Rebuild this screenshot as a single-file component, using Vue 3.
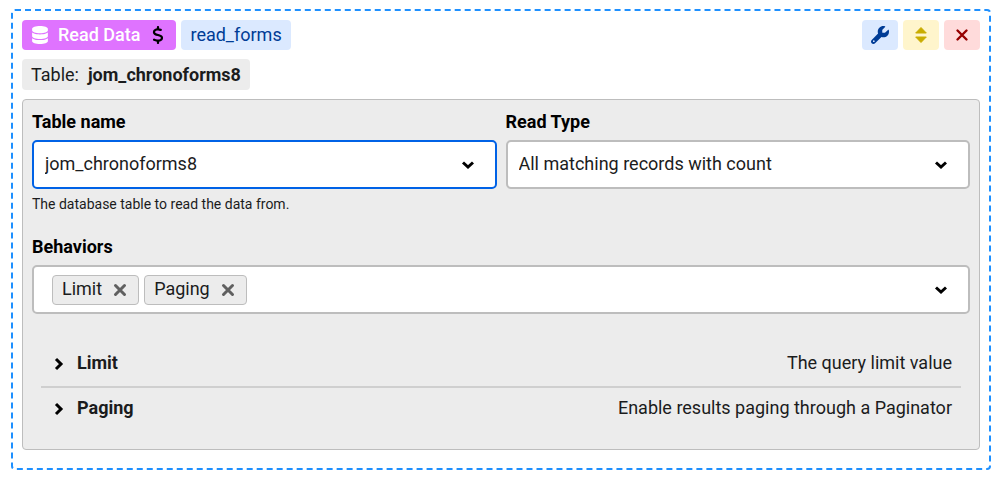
<script setup>
import { ref } from 'vue'

const tableName = ref('jom_chronoforms8')
const readType = ref('All matching records with count')
const behaviors = ref(['Limit', 'Paging'])
const sections = [
  { title: 'Limit', note: 'The query limit value' },
  { title: 'Paging', note: 'Enable results paging through a Paginator' },
]

function removeBehavior(name) {
  behaviors.value = behaviors.value.filter((item) => item !== name)
}
</script>

<template>
  <main class="block">
    <header class="bar">
      <span class="tag action">
        <svg class="db" viewBox="0 0 448 512" aria-hidden="true"><path fill="currentColor" d="M448 80v48c0 44.2-100.3 80-224 80S0 172.2 0 128V80C0 35.8 100.3 0 224 0S448 35.8 448 80zM393.2 214.7c20.8-7.4 39.9-16.9 54.8-28.6V288c0 44.2-100.3 80-224 80S0 332.2 0 288V186.1c14.9 11.8 34 21.2 54.8 28.6C99.7 230.7 159.5 240 224 240s124.3-9.3 169.2-25.3zM0 346.1c14.9 11.8 34 21.2 54.8 28.6C99.7 390.7 159.5 400 224 400s124.3-9.3 169.2-25.3c20.8-7.4 39.9-16.9 54.8-28.6V432c0 44.2-100.3 80-224 80S0 476.2 0 432V346.1z" /></svg>
        <span>Read Data</span>
        <svg class="dollar" viewBox="0 0 320 512" aria-hidden="true"><path fill="currentColor" d="M160 0c17.700 0 32 14.300 32 32V67.700c1.600 .2 3.100 .4 4.700 .7c.4 .1 .7 .1 1.100 .2l48 8.800c17.400 3.200 28.900 19.900 25.700 37.200s-19.900 28.900-37.200 25.700l-47.500-8.700c-31.300-4.600-58.900-1.500-78.300 6.200s-27.200 18.300-29 28.100c-2 10.700-.5 16.700 1.200 20.400c1.800 3.900 5.500 8.300 12.800 13.200c16.300 10.700 41.300 17.700 73.700 26.300l2.900 .8c28.600 7.600 63.600 16.800 89.600 33.800c14.200 9.300 27.600 21.900 35.900 39.500c8.500 17.900 10.300 37.900 6.400 59.200c-6.900 38-33.100 63.400-65.600 76.700c-13.700 5.600-28.600 9.200-44.400 11V480c0 17.700-14.300 32-32 32s-32-14.300-32-32V445.100c-.4-.1-.9-.1-1.300-.2l-.2 0c-24.400-3.800-64.500-14.300-91.500-26.300c-16.100-7.200-23.400-26.100-16.200-42.200s26.100-23.400 42.200-16.200c20.900 9.300 55.300 18.500 75.200 21.600c31.900 4.700 58.200 2 76-5.300c16.900-6.900 24.600-16.900 26.800-28.900c1.900-10.600 .4-16.700-1.300-20.400c-1.900-4-5.600-8.400-13-13.300c-16.400-10.700-41.500-17.700-74-26.300l-2.800-.7C119.400 279.300 84.400 270 58.400 253c-14.200-9.300-27.500-22-35.800-39.600c-8.400-17.900-10.100-37.900-6.100-59.200C23.700 116 52.300 91.200 84.800 78.300c13.300-5.300 27.900-8.900 43.200-11V32c0-17.700 14.300-32 32-32z" /></svg>
      </span>
      <span class="tag name">read_forms</span>
      <div class="tools">
        <button class="tool edit" type="button" aria-label="Settings">
          <svg viewBox="0 0 512 512" aria-hidden="true"><path fill="currentColor" d="M352 320c88.400 0 160-71.600 160-160c0-15.300-2.200-30.100-6.200-44.200c-3.100-10.800-16.400-13.200-24.300-5.300l-76.800 76.800c-3 3-7.100 4.700-11.300 4.700H336c-8.800 0-16-7.200-16-16V118.600c0-4.200 1.700-8.300 4.700-11.300l76.800-76.800c7.900-7.900 5.400-21.200-5.300-24.300C382.100 2.200 367.300 0 352 0C263.600 0 192 71.600 192 160c0 19.100 3.400 37.500 9.500 54.500L19.900 396.100C7.200 408.800 0 426.100 0 444.100C0 481.600 30.400 512 67.900 512c18 0 35.300-7.200 48-19.900L297.500 310.500c17 6.200 35.400 9.500 54.500 9.500zM80 408a24 24 0 1 1 0 48 24 24 0 1 1 0-48z" /></svg>
        </button>
        <button class="tool sort" type="button" aria-label="Move">
          <svg viewBox="0 0 18 18" aria-hidden="true"><path fill="currentColor" stroke="currentColor" stroke-linejoin="round" d="M9 1.500L14.300 7H3.700zM9 16.500L14.300 11H3.700z" /></svg>
        </button>
        <button class="tool remove" type="button" aria-label="Remove">
          <svg viewBox="0 0 18 18" aria-hidden="true"><path fill="none" stroke="currentColor" stroke-width="2.400" stroke-linecap="round" d="M4.500 4.500L13.500 13.500M13.500 4.500L4.500 13.500" /></svg>
        </button>
      </div>
    </header>

    <div class="bar">
      <span class="tag info">Table: <strong>{{ tableName }}</strong></span>
    </div>

    <section class="panel">
      <div class="fields">
        <div class="field">
          <label for="table-name">Table name</label>
          <div class="control">
            <select id="table-name" v-model="tableName" class="box active">
              <option>jom_chronoforms8</option>
            </select>
            <svg class="chevron" viewBox="0 0 18 18" aria-hidden="true"><path d="M4 6.500L9 11L14 6.500" /></svg>
          </div>
          <small>The database table to read the data from.</small>
        </div>
        <div class="field">
          <label for="read-type">Read Type</label>
          <div class="control">
            <select id="read-type" v-model="readType" class="box">
              <option>All matching records with count</option>
            </select>
            <svg class="chevron" viewBox="0 0 18 18" aria-hidden="true"><path d="M4 6.500L9 11L14 6.500" /></svg>
          </div>
        </div>
      </div>

      <div class="field" role="group" aria-labelledby="behaviors-label">
        <span id="behaviors-label" class="label">Behaviors</span>
        <div class="box multi">
          <span v-for="item in behaviors" :key="item" class="chip">
            <span class="chip-text">{{ item }}</span>
            <button type="button" :aria-label="`Remove ${item}`" @click="removeBehavior(item)">
              <svg viewBox="0 0 18 18" aria-hidden="true"><path d="M4.500 4.500L13.500 13.500M13.500 4.500L4.500 13.500" /></svg>
            </button>
          </span>
          <button class="open" type="button" aria-label="Show behaviors">
            <svg class="chevron" viewBox="0 0 18 18" aria-hidden="true"><path d="M4 6.500L9 11L14 6.500" /></svg>
          </button>
        </div>
      </div>

      <div class="sections">
        <details v-for="section in sections" :key="section.title">
          <summary>
            <svg class="arrow" viewBox="0 0 18 18" aria-hidden="true"><path d="M6 5L11 10L6 15" /></svg>
            <strong>{{ section.title }}</strong>
            <span class="note">{{ section.note }}</span>
          </summary>
        </details>
      </div>
    </section>
  </main>
</template>

<style>
body {
  background: #fff;
}
</style>

<style scoped>
* {
  box-sizing: border-box;
}
.block {
  display: flex;
  flex-direction: column;
  gap: 9px;
  margin: 9px 11px;
  padding: 9px 9px 18px;
  border: 2px dashed #1e90ff;
  border-radius: 4px;
  color: #1b1c1d;
  font: 18px/22px Roboto, sans-serif;
}
button {
  font: inherit;
  border: 0;
  padding: 0;
  cursor: pointer;
}
svg {
  display: block;
  flex: none;
  width: 18px;
  height: 18px;
}
.bar {
  display: flex;
  align-items: center;
  gap: 5px;
}
.tag {
  display: flex;
  align-items: center;
  height: 30px;
  padding: 0 9px;
  border-radius: 4px;
}
.action {
  gap: 9px;
  background: #df73ff;
  color: #fff;
  font-weight: 500;
}
.action .dollar {
  color: #000;
}
.name {
  background: #dbe9ff;
  color: #003c96;
}
.info {
  gap: 9px;
  height: 31px;
  background: #ececec;
}
.tools {
  display: flex;
  gap: 5px;
  margin-left: auto;
}
.tool {
  display: grid;
  place-items: center;
  width: 36px;
  height: 30px;
  border-radius: 4px;
}
.edit {
  background: #dbe9ff;
  color: #003c96;
}
.sort {
  background: #fff5cc;
  color: #c9ac00;
}
.remove {
  background: #ffdbdb;
  color: #960000;
}
.panel {
  padding: 11px 9px 18px;
  border: 1px solid #bdbdbd;
  border-radius: 4px;
  background: #ececec;
}
.fields {
  display: grid;
  grid-template-columns: 1fr 1fr;
  gap: 9px;
  margin-bottom: 23px;
}
.field {
  display: flex;
  flex-direction: column;
}
label,
.label {
  margin-bottom: 7px;
  color: #000;
  font-weight: 700;
}
.control {
  display: grid;
  align-items: center;
}
.control > * {
  grid-area: 1 / 1;
}
.box {
  width: 100%;
  height: 49px;
  padding: 0 11px 2px;
  border: 2px solid #bdbdbd;
  border-radius: 5px;
  background: #fff;
  color: #1b1c1d;
  font: inherit;
  appearance: none;
  outline: none;
}
.box.active {
  border-color: #0062e6;
}
.chevron,
.arrow {
  fill: none;
  stroke: #000;
  stroke-width: 3;
}
.control .chevron {
  justify-self: end;
  margin-right: 20px;
  pointer-events: none;
}
small {
  margin-top: 6px;
  font-size: 14px;
  line-height: 18px;
}
.multi {
  display: flex;
  align-items: center;
  gap: 5px;
  padding: 0 18px;
}
.chip {
  display: flex;
  align-items: center;
  gap: 9px;
  height: 30px;
  padding: 0 9px;
  border: 1px solid #bdbdbd;
  border-radius: 4px;
  background: #ececec;
}
.chip-text {
  padding-bottom: 2px;
}
.chip button {
  background: none;
}
.chip path {
  fill: none;
  stroke: #606060;
  stroke-width: 3;
  stroke-linecap: round;
}
.open {
  margin-left: auto;
  background: none;
}
.sections {
  margin: 29px 9px 0;
}
details + details {
  border-top: 2px solid #cfcfcf;
}
summary {
  display: flex;
  align-items: center;
  gap: 9px;
  height: 43px;
  padding: 0 9px 4px;
  list-style: none;
  cursor: pointer;
}
.note {
  margin-left: auto;
}
</style>
